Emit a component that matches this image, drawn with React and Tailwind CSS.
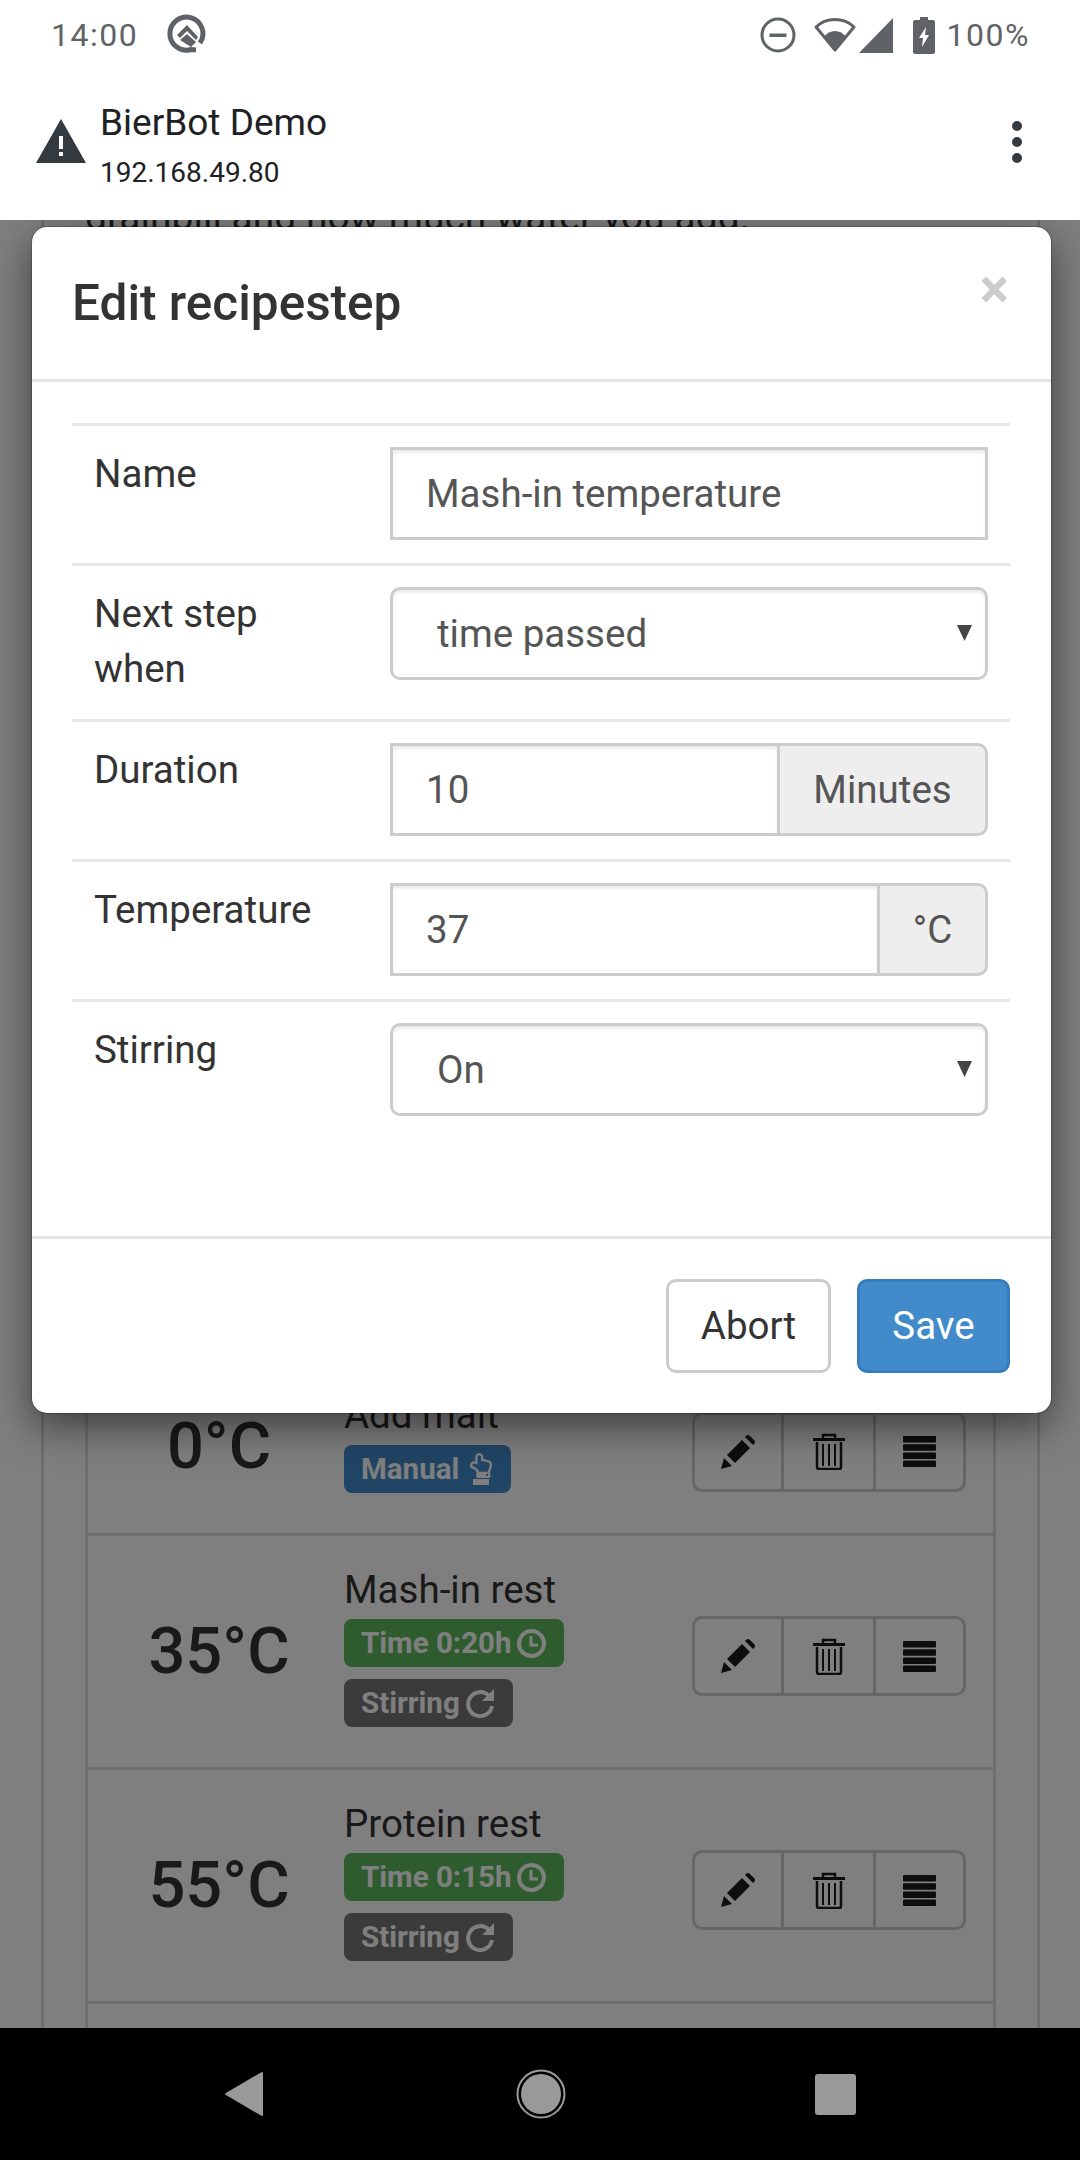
import { FaRegHandPointUp } from "react-icons/fa";

const StatusIcons = () => (
  <div className="flex items-center">
    {/* do not disturb */}
    <svg width="36" height="36" viewBox="0 0 36 36">
      <circle cx="18" cy="18" r="16" fill="none" stroke="#5f6368" strokeWidth="3" />
      <rect x="9.5" y="16.5" width="17" height="3.5" fill="#5f6368" />
    </svg>
    {/* wifi */}
    <svg width="42" height="36" viewBox="0 0 42 36" className="ml-[18px]">
      <path d="M21 33 L2 10 C12 0 30 0 40 10 Z" fill="none" stroke="#5f6368" strokeWidth="3" strokeLinejoin="round" />
      <path d="M21 34 L10 20 C15 12 27 12 32 20 Z" fill="#5f6368" />
    </svg>
    {/* signal */}
    <svg width="34" height="35" viewBox="0 0 34 35" className="ml-[3px]">
      <path d="M0 35 L34 0 V35 Z" fill="#5f6368" />
    </svg>
    {/* battery */}
    <svg width="22" height="37" viewBox="0 0 22 37" className="ml-[20px]">
      <path d="M7 0 H15 V3 H20 Q22 3 22 5 V35 Q22 37 20 37 H2 Q0 37 0 35 V5 Q0 3 2 3 H7 Z" fill="#5f6368" />
      <path d="M13 10 L6 21 H10 L9 30 L16 18 H12 Z" fill="#fff" />
    </svg>
    <span className="ml-[12px] text-[32px] leading-none tracking-[1.5px] text-[#5f6368]">100%</span>
  </div>
);

const Pencil = () => (
  <svg width="34" height="34" viewBox="0 0 34 34" fill="#1a1a1a">
    <path d="M0 34 L3 23 L11 31 Z" />
    <path d="M6 20 L21 5 L29 13 L14 28 Z" />
    <path d="M25 1 Q27 -1 29 1 L33 5 Q35 7 33 9 L32 10 L24 2 Z" />
  </svg>
);

const Trash = () => (
  <svg width="32" height="37" viewBox="0 0 32 37" fill="none" stroke="#1a1a1a">
    <path d="M10 5 V2 H22 V5" strokeWidth="2.5" />
    <path d="M0 6.5 H32" strokeWidth="3" />
    <path d="M4 9 V34 Q4 36 6 36 H26 Q28 36 28 34 V9" strokeWidth="2.5" />
    <path d="M10 11 V33 M16 11 V33 M22 11 V33" strokeWidth="2" />
  </svg>
);

const Bars = () => (
  <svg width="33" height="31" viewBox="0 0 33 31" fill="#1a1a1a">
    <rect y="0" width="33" height="6.5" rx="1" />
    <rect y="8.2" width="33" height="6.5" rx="1" />
    <rect y="16.4" width="33" height="6.5" rx="1" />
    <rect y="24.5" width="33" height="6.5" rx="1" />
  </svg>
);

const Clock = () => (
  <svg width="29" height="29" viewBox="0 0 29 29" fill="none" stroke="#fff">
    <circle cx="14.5" cy="14.5" r="12.5" strokeWidth="4" />
    <path d="M14 7 V16 H21" strokeWidth="3" />
  </svg>
);

const Repeat = () => (
  <svg width="29" height="30" viewBox="0 0 29 30" fill="none">
    <path d="M23 8 A12 12 0 1 0 26 18" stroke="#fff" strokeWidth="4" />
    <path d="M28 1 V13 H16 Z" fill="#fff" />
  </svg>
);

const Hand = () => (
  <span className="ml-[10px] flex flex-col items-center">
    <FaRegHandPointUp className="h-[25px] w-[24px] text-white" />
    <span className="mt-[1px] h-[6px] w-[16px] bg-white" />
  </span>
);

const Badge = ({ color, className, children }) => (
  <div className={`flex h-[48px] w-fit items-center rounded-[8px] pl-[17px] pr-[18px] text-[29.5px] font-bold text-white ${color} ${className}`}>
    {children}
  </div>
);

const steps = [
  { temp: "0°C", name: "Add malt", manual: true },
  { temp: "35°C", name: "Mash-in rest", time: "Time 0:20h" },
  { temp: "55°C", name: "Protein rest", time: "Time 0:15h" },
];

const StepRow = ({ step }) => (
  <div className="flex items-center border-b-[3px] border-[#ddd] pt-[28px] pb-[39px]">
    <div className="mt-[10px] w-[256px] pl-[6px] text-center text-[65px] font-medium leading-none text-[#333]">{step.temp}</div>
    <div className="flex-1">
      <div className="text-[38.5px] leading-[52px] text-[#333]">{step.name}</div>
      {step.manual ? (
        <Badge color="bg-[#428bca]" className="mt-[4px] mb-[1px]">
          Manual
          <Hand />
        </Badge>
      ) : (
        <>
          <Badge color="bg-[#5cb85c]" className="mt-[3px]">
            {step.time}
            <span className="ml-[5px]">
              <Clock />
            </span>
          </Badge>
          <Badge color="bg-[#777]" className="mt-[12px] mb-[1px]">
            Stirring
            <span className="ml-[6px]">
              <Repeat />
            </span>
          </Badge>
        </>
      )}
    </div>
    <div className="mr-[27px] mt-[20px] flex h-[80px] w-[274px] rounded-[10px] border-[3px] border-[#ccc]">
      <div className="flex w-[89px] items-center justify-center border-r-[3px] border-[#ccc]">
        <Pencil />
      </div>
      <div className="flex w-[92px] items-center justify-center border-r-[3px] border-[#ccc]">
        <Trash />
      </div>
      <div className="flex flex-1 items-center justify-center">
        <Bars />
      </div>
    </div>
  </div>
);

const fieldRow = "flex border-t-[3px] border-[#e6e6e6] pt-[20px] pb-[23px] pl-[22px] pr-[22px]";
const labelCls = "w-[296px] text-[38.5px] leading-[55px] text-[#333]";
const inputCls =
  "h-[93px] min-w-0 border-[3px] border-[#ccc] bg-white pl-[33px] text-[38.5px] text-[#555] shadow-[inset_0_3px_3px_rgba(0,0,0,0.075)] outline-none";

const SelectField = ({ value, options }) => (
  <div className="relative mt-[1px] flex-1">
    <select
      defaultValue={value}
      className="h-[93px] w-full appearance-none rounded-[10px] border-[3px] border-[#ccc] bg-white pl-[44px] text-[38.5px] text-[#555] shadow-[inset_0_3px_3px_rgba(0,0,0,0.075)] outline-none"
    >
      {options.map((o) => (
        <option key={o}>{o}</option>
      ))}
    </select>
    <svg width="15" height="16" viewBox="0 0 15 16" className="absolute right-[16px] top-[38px]">
      <path d="M0 0 H15 L7.5 16 Z" fill="#444" />
    </svg>
  </div>
);

const UnitField = ({ value, unit, width }) => (
  <div className="mt-[1px] flex flex-1">
    <input readOnly value={value} className={`${inputCls} w-0 flex-1 border-r-0`} />
    <div
      className={`flex h-[93px] items-center justify-center rounded-r-[10px] border-[3px] border-[#ccc] bg-[#eee] text-[38.5px] text-[#555] ${width}`}
    >
      {unit}
    </div>
  </div>
);

const EditModal = () => (
  <div className="absolute left-[31px] right-[28px] top-[6px] h-[1188px] overflow-hidden rounded-[16px] border border-black/20 bg-white bg-clip-padding shadow-[0_13px_39px_rgba(0,0,0,0.5)]">
    <div className="flex h-[155px] items-start justify-between border-b-[3px] border-[#e5e5e5] pl-[40px] pr-[42px]">
      <h4 className="mt-[50px] text-[49.5px] font-medium leading-[52px] text-[#333]">Edit recipestep</h4>
      <span className="mt-[36px] text-[55px] font-bold leading-[52px] text-[#ccc]">×</span>
    </div>
    <div className="h-[854px] pl-[40px] pt-[41px] pr-[41px]">
      <div className={fieldRow}>
        <div className={labelCls}>Name</div>
        <input readOnly value="Mash-in temperature" className={`${inputCls} mt-[1px] flex-1`} />
      </div>
      <div className={fieldRow}>
        <div className={labelCls}>
          Next step
          <br />
          when
        </div>
        <SelectField value="time passed" options={["time passed", "temperature reached"]} />
      </div>
      <div className={fieldRow}>
        <div className={labelCls}>Duration</div>
        <UnitField value="10" unit="Minutes" width="w-[211px]" />
      </div>
      <div className={fieldRow}>
        <div className={labelCls}>Temperature</div>
        <UnitField value="37" unit="°C" width="w-[111px]" />
      </div>
      <div className={fieldRow}>
        <div className={labelCls}>Stirring</div>
        <SelectField value="On" options={["On", "Off"]} />
      </div>
    </div>
    <div className="flex justify-end gap-[26px] border-t-[3px] border-[#e5e5e5] pr-[41px] pt-[40px]">
      <button className="h-[94px] w-[165px] rounded-[10px] border-[3px] border-[#ccc] bg-white text-[38.5px] text-[#333]">
        Abort
      </button>
      <button className="h-[94px] w-[153px] rounded-[10px] border-[3px] border-[#357ebd] bg-[#428bca] text-[38.5px] text-white">
        Save
      </button>
    </div>
  </div>
);

export default function App() {
  return (
    <div className="flex h-[2160px] w-[1080px] flex-col overflow-hidden bg-white font-['Roboto',sans-serif]">
      {/* Android status bar */}
      <div className="flex h-[66px] shrink-0 items-center justify-between pl-[51px] pr-[50px] pt-[4px]">
        <div className="flex items-center">
          <span className="text-[32px] leading-none tracking-[1.5px] text-[#5f6368]">14:00</span>
          <svg width="40" height="40" viewBox="0 0 40 40" className="ml-[29px] -mt-[3px]">
            <path d="M29 36 L24 35.5 A16.5 16.5 0 1 1 33 29" fill="none" stroke="#5f6368" strokeWidth="5" />
            <path d="M20 11 L10 21 L13 24 L20 17 L29 26 L31 23 Z" fill="#5f6368" />
            <path d="M20 20 L13 26 L24 33 L29 28 Z" fill="#5f6368" />
          </svg>
        </div>
        <StatusIcons />
      </div>

      {/* browser bar */}
      <div className="flex h-[154px] shrink-0 items-center pl-[36px] pr-[58px]">
        <svg width="50" height="44" viewBox="0 0 50 44" className="-mt-[4px]">
          <path d="M25 0 L50 44 H0 Z" fill="#333a40" />
          <rect x="23" y="17" width="4" height="13" fill="#fff" />
          <rect x="23" y="33" width="4" height="4" fill="#fff" />
        </svg>
        <div className="ml-[14px] mt-[3px] flex-1">
          <div className="text-[37px] leading-[44px] text-[#202124]">BierBot Demo</div>
          <div className="mt-[12px] text-[28px] leading-[32px] text-[#202124]">192.168.49.80</div>
        </div>
        <div className="-mt-[2px] flex flex-col gap-[6px]">
          <span className="h-[10px] w-[10px] rounded-full bg-[#333a40]" />
          <span className="h-[10px] w-[10px] rounded-full bg-[#333a40]" />
          <span className="h-[10px] w-[10px] rounded-full bg-[#333a40]" />
        </div>
      </div>

      {/* page behind the dialog */}
      <div className="relative min-h-0 flex-1 overflow-hidden">
        <div className="ml-[41px] mr-[40px] -mt-[30px] h-[1900px] border-x-[3px] border-[#ddd] px-[41px]">
          <p className="text-[39px] leading-[55px] text-[#333]">grainbill and how much water you add.</p>
          <div className="mt-[1116px] h-[1000px] border-x-[3px] border-[#ddd]">
            {steps.map((s) => (
              <StepRow key={s.name} step={s} />
            ))}
          </div>
        </div>
        <div className="absolute inset-0 bg-black/50" />
        <EditModal />
      </div>

      {/* android nav bar */}
      <div className="flex h-[132px] shrink-0 items-center bg-black">
        <svg width="40" height="46" viewBox="0 0 40 46" className="ml-[224px]">
          <path d="M38 2 V44 L2 23 Z" fill="#999" stroke="#999" strokeWidth="2" strokeLinejoin="round" />
        </svg>
        <svg width="50" height="50" viewBox="0 0 50 50" className="ml-[252px]">
          <circle cx="25" cy="25" r="23.5" fill="none" stroke="#999" strokeWidth="2" />
          <circle cx="25" cy="25" r="20" fill="#999" />
        </svg>
        <div className="ml-[249px] h-[41px] w-[41px] rounded-[3px] bg-[#999]" />
      </div>
    </div>
  );
}
